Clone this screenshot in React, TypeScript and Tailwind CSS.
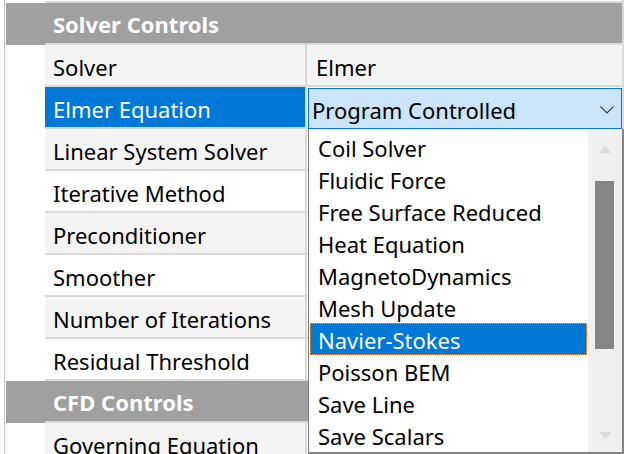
import React from "react";

type Row =
  | { kind: "category"; label: string }
  | { kind: "prop"; name: string; value?: string; selected?: boolean };

const rows: Row[] = [
  { kind: "category", label: "Solver Controls" },
  { kind: "prop", name: "Solver", value: "Elmer" },
  { kind: "prop", name: "Elmer Equation", selected: true },
  { kind: "prop", name: "Linear System Solver" },
  { kind: "prop", name: "Iterative Method" },
  { kind: "prop", name: "Preconditioner" },
  { kind: "prop", name: "Smoother" },
  { kind: "prop", name: "Number of Iterations" },
  { kind: "prop", name: "Residual Threshold" },
  { kind: "category", label: "CFD Controls" },
  { kind: "prop", name: "Governing Equation" },
];

const options = [
  "Coil Solver",
  "Fluidic Force",
  "Free Surface Reduced",
  "Heat Equation",
  "MagnetoDynamics",
  "Mesh Update",
  "Navier-Stokes",
  "Poisson BEM",
  "Save Line",
  "Save Scalars",
];

const Combo = () => (
  <div className="ml-px mt-px flex h-[41px] flex-1 items-center border border-[#0078d7] bg-[#cce4f7] pl-[3px] pr-[7px]">
    <span className="flex-1 pt-[2px] text-black">Program Controlled</span>
    <svg width="14" height="8" viewBox="0 0 14 8" className="mt-[2px]">
      <path d="M0.5 0.5 L7 7 L13.5 0.5" fill="none" stroke="#3c3c3c" strokeWidth="1.1" />
    </svg>
  </div>
);

const PropRow = ({ name, value, selected, alt }: { name: string; value?: string; selected?: boolean; alt: boolean }) => {
  const bg = alt ? "bg-[#f4f4f4]" : "bg-white";
  return (
    <div className="flex h-[42px] shrink-0">
      <div className="w-[39px] bg-white" />
      <div
        className={`flex w-[260px] items-center border-b-2 border-[#d9d9d9] pl-[8px] pt-[3px] ${
          selected ? "bg-[#0078d7] text-white" : `${bg} text-black`
        }`}
      >
        {name}
      </div>
      <div className="w-[2px] bg-[#d9d9d9]" />
      {selected ? (
        <div className="flex flex-1 bg-white">
          <Combo />
        </div>
      ) : (
        <div className={`flex flex-1 items-center border-b-2 border-[#d9d9d9] pl-[9px] pt-[3px] ${bg}`}>{value}</div>
      )}
    </div>
  );
};

const CategoryRow = ({ label }: { label: string }) => (
  <div className="flex h-[42px] shrink-0 bg-[#a0a0a0]">
    <div className="w-[39px]" />
    <div className="flex flex-1 items-center border-b-2 border-[#d9d9d9] pl-[8px] pt-[2px] font-bold text-white">
      {label}
    </div>
  </div>
);

const Dropdown = () => (
  <div className="absolute left-[308px] top-[129px] flex h-[325px] w-[316px] border-b-2 border-l border-r-2 border-[#838383] bg-white pt-[2px]">
    <div className="w-[279px] pl-px pr-px">
      {options.map((o) => (
        <div
          key={o}
          className={`flex h-[32px] items-center pl-[8px] pt-[2px] ${
            o === "Navier-Stokes"
              ? "bg-[#0078d7] text-white outline-1 -outline-offset-1 outline-dotted outline-[#f5a04a]"
              : "text-black"
          }`}
        >
          {o}
        </div>
      ))}
    </div>
    <div className="relative flex-1 bg-[#f0f0f0]">
      <svg width="12" height="7" viewBox="0 0 12 7" className="absolute left-[11px] top-[15px]">
        <path d="M0 7 L6 0 L12 7 Z" fill="#dadada" />
      </svg>
      <div className="absolute left-[7px] top-[50px] h-[168px] w-[19px] bg-[#858585]" />
      <svg width="12" height="7" viewBox="0 0 12 7" className="absolute left-[11px] top-[301px]">
        <path d="M0 0 L6 7 L12 0 Z" fill="#dadada" />
      </svg>
    </div>
  </div>
);

export default function App() {
  let propIndex = 0;
  return (
    <div
      className="relative h-[454px] w-[624px] overflow-hidden bg-white text-[22px] leading-none"
      style={{ fontFamily: '"Noto Sans", "Open Sans", sans-serif' }}
    >
      <div className="flex h-full pl-[4px]">
        <div className="w-px bg-[#c8c8c8]" />
        <div className="ml-px flex flex-1 flex-col border-r-2 border-[#d9d9d9]">
          <div className="flex h-[3px] shrink-0">
            <div className="w-[39px]" />
            <div className="mt-px h-[2px] flex-1 bg-[#d9d9d9]" />
          </div>
          {rows.map((r, i) => {
            if (r.kind === "category") {
              propIndex = 0;
              return <CategoryRow key={i} label={r.label} />;
            }
            propIndex += 1;
            return (
              <PropRow key={i} name={r.name} value={r.value} selected={r.selected} alt={propIndex % 2 === 1} />
            );
          })}
        </div>
      </div>
      <Dropdown />
    </div>
  );
}
